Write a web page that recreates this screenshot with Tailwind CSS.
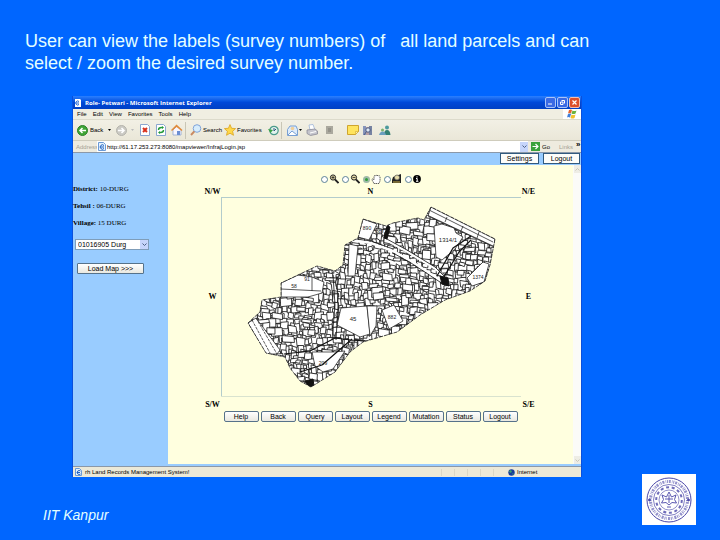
<!DOCTYPE html>
<html lang="en">
<head>
    <meta charset="UTF-8">
    <meta name="viewport" content="width=device-width, initial-scale=1.0">
    <title>Land Records - Survey Numbers</title>
    <script src="https://cdn.jsdelivr.net/npm/@tailwindcss/browser@4"></script>
</head>
<body class="bg-[#0066ff] font-['Liberation_Sans',Arial,sans-serif]">

<div class="min-h-screen flex flex-col">

    <h1 class="pt-[30px] pl-[25px] pr-24 text-[18px] leading-[22px] text-[#e4ffff]">User can view the labels (survey numbers) of&nbsp;&nbsp; all land parcels and can<br>select / zoom the desired survey number.</h1>

    <!-- Browser window -->
    <main class="mt-[22px] ml-[72px] mr-[138px] border-x border-[#0a50dc] text-[6px] leading-[8px] text-black">

        <!-- Title bar -->
        <header class="h-[13px] flex items-center gap-[3px] px-px bg-linear-to-b from-[#2a7fff] via-[#0048d8] to-[#0040c4] text-white">
            <svg class="w-[8px] h-[8px]" viewBox="0 0 8 8"><path d="M1 0h5l1 1v7H1z" fill="#fff"/><path d="M5 2.5A2 2 0 1 0 5 5.5M2 4h3" fill="none" stroke="#1c62d6"/></svg>
            <span class="grow font-['Open_Sans',sans-serif] font-bold">Role- Petwari - Microsoft Internet Explorer</span>
            <div class="flex gap-px">
                <button aria-label="Minimize" class="w-[11px] h-[11px] rounded-[2px] border border-[#a9c4f8] bg-[#3a6ae4] flex items-end p-[2px]"><svg class="w-[5px] h-[2px]" viewBox="0 0 5 2"><path d="M0 1h4" stroke="#fff"/></svg></button>
                <button aria-label="Restore" class="w-[11px] h-[11px] rounded-[2px] border border-[#a9c4f8] bg-[#3a6ae4] flex items-center justify-center"><svg class="w-[7px] h-[7px]" viewBox="0 0 7 7"><path d="M2.5 1.500h3v3M1.500 3h2.500v2.500h-2.500z" fill="none" stroke="#fff"/></svg></button>
                <button aria-label="Close" class="w-[11px] h-[11px] rounded-[2px] border border-[#f2bfb0] bg-[#dc4f2c] flex items-center justify-center"><svg class="w-[7px] h-[7px]" viewBox="0 0 7 7"><path d="M1.500 1.500l4 4m0-4l-4 4" stroke="#fff" stroke-width="1.200"/></svg></button>
            </div>
        </header>

        <!-- Menu bar -->
        <nav class="h-[11px] flex items-center gap-[6px] pl-[4px] bg-[#f0eee2] border-b border-[#dcdacb]">
            <a href="#">File</a>
            <a href="#">Edit</a>
            <a href="#">View</a>
            <a href="#">Favorites</a>
            <a href="#">Tools</a>
            <a href="#">Help</a>
            <span class="ml-auto w-[18px] h-[10px] bg-white flex items-center justify-center">
                <svg class="w-[10px] h-[10px]" viewBox="0 0 10 10"><path d="M2 1q2-1 3 0L4 4.500q-2-1-3 0z" fill="#e8632c"/><path d="M5.500 1.500q2 1 4 0l-1 3q-2 1-4 0z" fill="#6cb33e"/><path d="M1 5q2-1 3 0L3 8.500q-2-1-3 0z" fill="#3f7fd9"/><path d="M4.500 5.500q2 1 4 0l-1 3.500q-2 1-4 0z" fill="#f2c02e"/></svg>
            </span>
        </nav>

        <!-- Toolbar -->
        <div class="h-[21px] flex items-center pl-[4px] bg-linear-to-b from-[#f2f0e5] to-[#eae7d8] border-b border-[#cfccbc]">
            <button class="flex items-center gap-[2px] w-[39px]">
                <svg class="w-[11px] h-[11px]" viewBox="0 0 11 11"><circle cx="5.500" cy="5.500" r="5" fill="#3fa535" stroke="#2b7f2a"/><path d="M9 5.500H3M5.500 3L3 5.500 5.500 8" fill="none" stroke="#fff" stroke-width="1.500"/></svg>
                Back
                <svg class="ml-[3px] w-[3px] h-[2px]" viewBox="0 0 3 2"><path d="M0 0h3L1.500 2z"/></svg>
            </button>
            <button aria-label="Forward" class="flex items-center gap-[4px] w-[24px]">
                <svg class="w-[11px] h-[11px]" viewBox="0 0 11 11"><circle cx="5.500" cy="5.500" r="5" fill="#cbcac4" stroke="#b4b3ac"/><path d="M2 5.500h6M5.500 3L8 5.500 5.500 8" fill="none" stroke="#fff" stroke-width="1.500"/></svg>
                <svg class="w-[3px] h-[2px]" viewBox="0 0 3 2"><path d="M0 0h3L1.500 2z" fill="#bbb"/></svg>
            </button>
            <button aria-label="Stop" class="w-[16px]"><svg class="w-[10px] h-[12px]" viewBox="0 0 10 12"><path d="M.5.5h7l2 2v9h-9z" fill="#fff" stroke="#8ba6cf"/><path d="M3 4l4 4m0-4L3 8" stroke="#d9301c" stroke-width="2"/></svg></button>
            <button aria-label="Refresh" class="w-[15px]"><svg class="w-[10px] h-[12px]" viewBox="0 0 10 12"><path d="M.5.5h7l2 2v9h-9z" fill="#fff" stroke="#8ba6cf"/><path d="M2.500 6q0-2.500 3-2.500h1M7.500 6q0 2.500-3 2.500h-1" fill="none" stroke="#249a3a" stroke-width="1.400"/><path d="M6 2l2 1.600L6 5zM4 7L2 8.500 4 10z" fill="#249a3a"/></svg></button>
            <button aria-label="Home" class="w-[14px]"><svg class="w-[12px] h-[12px]" viewBox="0 0 12 12"><path d="M2 6l4-4 4 4v5H2z" fill="#f8f6ff" stroke="#8fa6cf" stroke-width=".8"/><path d="M0 6l5.500-5.500L11.500 6l-1 1-5-4-4.500 4z" fill="#e08b3c"/><path d="M6 7h3v4H6z" fill="#6b8ed3"/></svg></button>
            <button class="flex items-center gap-px w-[39px] h-[17px] pl-[4px] border-l border-[#c9c6b6]">
                <svg class="w-[12px] h-[12px]" viewBox="0 0 12 12"><circle cx="7" cy="4.500" r="3.800" fill="#d6ecfc" stroke="#7fa3d8"/><path d="M4.300 7.300L1 11" stroke="#c98a62" stroke-width="2"/></svg>
                Search
            </button>
            <button class="flex items-center gap-px w-[40px]">
                <svg class="w-[12px] h-[12px]" viewBox="0 0 12 12"><path d="M6 .6l1.600 3.700 4 .3-3 2.700.9 4L6 9.200 2.500 11.300l.9-4-3-2.700 4-.3z" fill="#ffd84a" stroke="#dba520" stroke-width=".8"/></svg>
                Favorites
            </button>
            <button aria-label="History" class="w-[18px] h-[17px] flex items-center pl-[4px] border-r border-[#c9c6b6]"><svg class="w-[11px] h-[11px]" viewBox="0 0 11 11"><circle cx="6" cy="5.500" r="4.200" fill="#e3f3ee" stroke="#4c9b8b" stroke-width="1.200"/><path d="M6 3v3l2-2" fill="none" stroke="#30557d"/><path d="M0 4l2.500 4L5 5z" fill="#3aa344"/></svg></button>
            <button aria-label="Mail" class="ml-[5px] flex items-center gap-px w-[19px]"><svg class="w-[11px] h-[11px]" viewBox="0 0 11 11"><path d="M.5 4.500L3 1h6l1.500 3.500v6H.5z" fill="#dcebfb" stroke="#78a0d4"/><path d="M1 10l4-4 5 4" fill="#fff" stroke="#78a0d4"/><circle cx="5.500" cy="3.500" r="1.800" fill="#f0cf9a"/></svg><svg class="w-[3px] h-[2px]" viewBox="0 0 3 2"><path d="M0 0h3L1.500 2z"/></svg></button>
            <button aria-label="Print" class="w-[19px]"><svg class="w-[12px] h-[12px]" viewBox="0 0 12 12"><path d="M3 1l4-.5L9 6H4z" fill="#fff" stroke="#9db4d8" stroke-width=".8"/><path d="M1 6l8-1 2.500 2v3l-7 1.500L1 9.500z" fill="#c4c4cc" stroke="#8c8c98" stroke-width=".8"/><path d="M4 9l6-1.500" stroke="#fff"/></svg></button>
            <button aria-label="Edit" class="w-[22px]"><svg class="w-[9px] h-[8px]" viewBox="0 0 9 8"><path d="M1 0h7v8H1z" fill="#aaa89e"/><path d="M3 2h3v4H3z" fill="#94928a"/></svg></button>
            <button aria-label="Notes" class="w-[15px]"><svg class="w-[12px] h-[10px]" viewBox="0 0 12 10"><path d="M.5.5h11v6l-3 3h-8z" fill="#ffe45e" stroke="#cfa52e"/><path d="M8.500 9.500v-3h3z" fill="#fff3a8" stroke="#cfa52e" stroke-width=".6"/></svg></button>
            <button aria-label="Research" class="w-[17px]"><svg class="w-[11px] h-[11px]" viewBox="0 0 11 11"><path d="M1 1h3v9H1z" fill="#8795bb"/><path d="M4 2h3v8H4z" fill="#b6a0a6"/><path d="M7 1h3v9H7z" fill="#7783a2"/><circle cx="6" cy="5" r="2.200" fill="#dfe9f5" stroke="#4d5c83"/><path d="M4.500 6.500L2 10" stroke="#4d5c83"/></svg></button>
            <button aria-label="Messenger"><svg class="w-[12px] h-[11px]" viewBox="0 0 12 11"><circle cx="8" cy="2.500" r="2" fill="#4d9a9d"/><path d="M5 10q0-5 3-5t3.500 5z" fill="#358073"/><circle cx="3.500" cy="5" r="1.500" fill="#7db36a"/><path d="M0 10q1-3.500 3.500-3.500T7 10z" fill="#6b9fbf"/></svg></button>
        </div>

        <!-- Address bar -->
        <div class="h-[12px] flex items-center bg-[#eeebdf] border-b border-[#8b98a8]">
            <label for="address" class="pl-[3px] w-[24px] text-[#a5a295]">Address</label>
            <div class="grow h-full flex items-center gap-px bg-white pl-px">
                <svg class="w-[8px] h-[9px]" viewBox="0 0 8 9"><path d="M.5.5h5l2 2v6h-7z" fill="#e6f1fd" stroke="#6a9ad6"/><path d="M6 3.500a2.200 2.200 0 1 0 0 3M2.500 5H6" fill="none" stroke="#1d62c4"/></svg>
                <input id="address" type="text" value="http://61.17.253.273:8080/mapviewer/InfrajLogin.jsp" class="grow min-w-0 h-[9px] outline-none">
                <button aria-label="Show addresses" class="w-[8px] h-[10px] bg-[#c6d5fb] flex items-center justify-center"><svg class="w-[5px] h-[3px]" viewBox="0 0 5 3"><path d="M.5.500l2 2 2-2" fill="none" stroke="#4d6185"/></svg></button>
            </div>
            <button class="flex items-center gap-[2px] pl-[3px] w-[31px]"><svg class="w-[9px] h-[9px]" viewBox="0 0 9 9"><path d="M0 0h9v9H0z" fill="#3aa23c"/><path d="M1.500 4.500h5M4.500 2L7 4.500 4.500 7" fill="none" stroke="#fff" stroke-width="1.200"/></svg>Go</button>
            <span class="w-[17px] text-[#a5a295]">Links</span>
            <span class="w-[5px] text-[8px] font-bold self-start">»</span>
        </div>

        <!-- Page content -->
        <section class="bg-[#99ccff]">
            <div class="h-[12px] flex justify-end gap-[4px] pr-px text-[7px] leading-[9px]">
                <button class="w-[39px] h-[11px] bg-[#fdfdfa] border border-[#315a7e]">Settings</button>
                <button class="w-[37px] h-[11px] bg-[#fdfdfa] border border-[#315a7e]">Logout</button>
            </div>

            <div class="flex">
                <aside class="w-[95px] shrink-0 pt-[20px] font-['Liberation_Serif',serif] text-[7px] leading-[9px]">
                    <p><b>District:</b> 10-DURG</p>
                    <p class="mt-[8px]"><b>Tehsil :</b> 06-DURG</p>
                    <p class="mt-[8px]"><b>Village:</b> 15 DURG</p>
                    <div class="relative mt-[11px] ml-[2px] w-[74px] font-['Liberation_Sans',Arial,sans-serif]">
                        <select aria-label="Village map" class="block appearance-none w-full h-[11px] pl-[2px] bg-white border border-[#7f9db9] text-[7px] leading-[8px]">
                            <option>01016905 Durg</option>
                        </select>
                        <span class="absolute right-px top-px w-[8px] h-[9px] bg-[#c6d5fb] flex items-center justify-center pointer-events-none"><svg class="w-[5px] h-[3px]" viewBox="0 0 5 3"><path d="M.5.500l2 2 2-2" fill="none" stroke="#4d6185"/></svg></span>
                    </div>
                    <button class="block mt-[13px] ml-[4px] w-[67px] h-[11px] rounded-[1px] bg-linear-to-b from-white to-[#e9e8e0] border border-[#56728a] font-['Liberation_Sans',Arial,sans-serif] text-[7px] leading-[8px]">Load Map &gt;&gt;&gt;</button>
                </aside>

                <div class="grow bg-[#ffffdf] flex flex-col items-center pt-[8px] pb-[42px]">
                    <!-- Map tools -->
                    <div class="flex items-center gap-[3px] h-[12px]">
                        <label class="flex items-center gap-px"><input type="radio" name="tool" class="appearance-none w-[7px] h-[7px] rounded-full border border-[#5d8296] bg-white checked:border-2 checked:border-[#9fb9a8] checked:bg-[#2f9e3a]"><svg class="w-[10px] h-[10px]" viewBox="0 0 10 10" aria-label="Zoom in"><circle cx="4" cy="3.500" r="2.600" fill="#e6dca8" stroke="#222"/><path d="M2.500 3.500h3M4 2v3" stroke="#222" stroke-width=".8"/><path d="M6 5.500L9.500 9" stroke="#222" stroke-width="1.800"/></svg></label>
                        <label class="flex items-center gap-px"><input type="radio" name="tool" class="appearance-none w-[7px] h-[7px] rounded-full border border-[#5d8296] bg-white checked:border-2 checked:border-[#9fb9a8] checked:bg-[#2f9e3a]"><svg class="w-[10px] h-[10px]" viewBox="0 0 10 10" aria-label="Zoom out"><circle cx="4" cy="3.500" r="2.600" fill="#e6dca8" stroke="#222"/><path d="M2.500 3.500h3" stroke="#222" stroke-width=".8"/><path d="M6 5.500L9.500 9" stroke="#222" stroke-width="1.800"/></svg></label>
                        <label class="flex items-center gap-px"><input type="radio" name="tool" checked class="appearance-none w-[7px] h-[7px] rounded-full border border-[#5d8296] bg-white checked:border-2 checked:border-[#9fb9a8] checked:bg-[#2f9e3a]"><svg class="w-[10px] h-[10px]" viewBox="0 0 10 10" aria-label="Pan"><path d="M3 9.500L.8 5.500l1-.7L3 6V2l1-.6L5 2l.8-1.200L7 2l1.300-.4L9 3v4L8 9.500z" fill="#fff" stroke="#333" stroke-width=".8" stroke-dasharray="1.500 .7"/></svg></label>
                        <label class="flex items-center gap-px"><input type="radio" name="tool" class="appearance-none w-[7px] h-[7px] rounded-full border border-[#5d8296] bg-white checked:border-2 checked:border-[#9fb9a8] checked:bg-[#2f9e3a]"><svg class="w-[10px] h-[10px]" viewBox="0 0 10 10" aria-label="Full extent"><path d="M1 3l8-3v9H0V6z" fill="#222"/><circle cx="5" cy="3.500" r="2.500" fill="#e6dca8" stroke="#555" stroke-width=".7"/><path d="M1 8h7" stroke="#c8ad48"/></svg></label>
                        <label class="flex items-center gap-px"><input type="radio" name="tool" class="appearance-none w-[7px] h-[7px] rounded-full border border-[#5d8296] bg-white checked:border-2 checked:border-[#9fb9a8] checked:bg-[#2f9e3a]"><svg class="w-[8px] h-[8px]" viewBox="0 0 8 8" aria-label="Info"><circle cx="4" cy="4" r="3.900"/><path d="M4 1.300v1.200M3 3.500h1.200V6M3 6.300h2.400" fill="none" stroke="#fff"/></svg></label>
                    </div>

                    <!-- Map with compass labels -->
                    <div class="mt-[2px] grid grid-cols-[16px_300px_16px] items-center text-center whitespace-nowrap font-['Liberation_Serif',serif] font-bold text-[8px] leading-[10px]">
                        <span>N/W</span><span>N</span><span>N/E</span>
                        <span>W</span>
                        <svg class="w-[300px] h-[200px]" viewBox="221 197 300 200">
                            <defs><clipPath id="village"><path d="M363 219L386 226 393 223 418 218 424 220 431 207 495 239 490 265 485 281 470 291 445 300 420 315 397 332 363 342 350 352 335 372 311 387 300 381 290 368 285 357 266 353 248 323 260 312 262 300 281 297 281 283 298 275 317 266 335 271 343 265 345 245 358 238z"/></clipPath></defs>
                            <g clip-path="url(#village)" stroke="#111" stroke-linejoin="round">
                                <path d="M221 197h300v200H221z" fill="#fff" stroke="none"/>
                                <g id="parcels" fill="#fff" stroke-width=".8"></g>
                                <g fill="#fff" stroke-width=".7">
                                    <path d="M363 219l14 5-8 16-11-3z"/>
                                    <path d="M431 207l64 32-1 8-66-31z"/>
                                    <path d="M429 210l64 32M427 215l66 31M447 217l-2 5M463 226l-2 5M479 232l-2 6" fill="none"/>
                                    <path d="M434 226l8-2 12 4 2 5 7 4-8 12-13 11-6-3z"/>
                                    <path d="M483 262l6 2-5 18-12 4-5-8z"/>
                                    <path d="M349 244l9 2-3 30h-7z"/>
                                    <path d="M341 308l26-2 3 28-10 3-23-12z"/>
                                    <path d="M367 306l10 0-1 20-6 10z"/>
                                    <path d="M281 283l17-8 14 2 12 5-2 11-14 4-27 0z"/>
                                    <path d="M281 289l40 2M312 277v14" fill="none"/>
                                    <path d="M248 323l8-5 24 32-3 4h-11z"/>
                                    <path d="M256 318l21 36M252 320l18 33" fill="none" stroke-dasharray="3 1"/>
                                    <path d="M312 352h21l12-1-12 18-10 3-8-6z"/>
                                    <path d="M382 310l12-5 9 16-14 8z"/>
                                </g>
                                <path d="M386 240l22 12 28 17 10 10M349 240l22 3 22 8 18 10 32 21" fill="none" stroke="#fff" stroke-width="2.500"/>
                                <path d="M385 238l22 12 28 17 10 10M349 238l22 3 22 8M393 253l18 10 32 21M333 275l2 30-3 35M337 276l1 30-2 34" fill="none" stroke-width=".8"/>
                                <path d="M387 226l3 1-3 12-3-1zM440 276l8 2 1 8-7-2zM305 381l8-2 1 7-5 1z" fill="#111"/>
                                <path d="M437 276l16-28 18-12M442 280l17-28 12-12M284 354l26-3 25-13 16 2 14 1M300 372l22-7 30-26" fill="none" stroke-width="1.200"/>
                            </g>
                            <path d="M363 219L386 226 393 223 418 218 424 220 431 207 495 239 490 265 485 281 470 291 445 300 420 315 397 332 363 342 350 352 335 372 311 387 300 381 290 368 285 357 266 353 248 323 260 312 262 300 281 297 281 283 298 275 317 266 335 271 343 265 345 245 358 238z" fill="none" stroke="#222" stroke-width=".8" stroke-dasharray="4 1"/>
                            <g font-family="Liberation Sans" font-size="5" font-weight="400" fill="#222" text-anchor="middle">
                                <text x="367" y="230">890</text>
                                <text x="380" y="233">887</text>
                                <text x="448" y="242" font-size="6">1314/1</text>
                                <text x="478" y="279">1374</text>
                                <text x="353" y="321" font-size="6">45</text>
                                <text x="392" y="319">882</text>
                                <text x="307" y="281">91</text>
                                <text x="294" y="288">58</text>
                                <text x="323" y="365">209</text>
                            </g>
                            <path d="M221.500 197v199.500M221 197.500h300" fill="none" stroke="#b3cccc"/>
                            <path d="M221 396.500h300" stroke="#d9e3cf"/>
                        </svg>
                        <span>E</span>
                        <span class="pt-[3px]">S/W</span><span class="pt-[3px]">S</span><span class="pt-[3px]">S/E</span>
                    </div>

                    <div class="mt-px flex gap-[2px] text-[7px] leading-[8px]">
                        <button class="w-[35px] h-[11px] rounded-[2px] bg-linear-to-b from-white to-[#e9e8e0] border border-[#56728a]">Help</button>
                        <button class="w-[35px] h-[11px] rounded-[2px] bg-linear-to-b from-white to-[#e9e8e0] border border-[#56728a]">Back</button>
                        <button class="w-[35px] h-[11px] rounded-[2px] bg-linear-to-b from-white to-[#e9e8e0] border border-[#56728a]">Query</button>
                        <button class="w-[35px] h-[11px] rounded-[2px] bg-linear-to-b from-white to-[#e9e8e0] border border-[#56728a]">Layout</button>
                        <button class="w-[35px] h-[11px] rounded-[2px] bg-linear-to-b from-white to-[#e9e8e0] border border-[#56728a]">Legend</button>
                        <button class="w-[35px] h-[11px] rounded-[2px] bg-linear-to-b from-white to-[#e9e8e0] border border-[#56728a]">Mutation</button>
                        <button class="w-[35px] h-[11px] rounded-[2px] bg-linear-to-b from-white to-[#e9e8e0] border border-[#56728a]">Status</button>
                        <button class="w-[35px] h-[11px] rounded-[2px] bg-linear-to-b from-white to-[#e9e8e0] border border-[#56728a]">Logout</button>
                    </div>
                </div>

                <!-- Scrollbar -->
                <div class="w-[8px] shrink-0 bg-[#fbfbf8] flex flex-col items-center justify-between">
                    <span class="w-[7px] h-[8px] bg-[#eeede5] flex items-center justify-center"><svg class="w-[5px] h-[3px]" viewBox="0 0 5 3"><path d="M.5 2.500l2-2 2 2" fill="none" stroke="#c9c7ba"/></svg></span>
                    <span class="w-[7px] h-[8px] bg-[#eeede5] flex items-center justify-center"><svg class="w-[5px] h-[3px]" viewBox="0 0 5 3"><path d="M.5.500l2 2 2-2" fill="none" stroke="#c9c7ba"/></svg></span>
                </div>
            </div>
            <div class="h-[2px]"></div>
        </section>

        <!-- Status bar -->
        <footer class="h-[11px] flex items-center gap-[3px] pl-[2px] bg-[#ece9d8] border-t border-[#8b98a8]">
            <svg class="w-[7px] h-[8px]" viewBox="0 0 7 8"><path d="M.5.500h4l2 2v5h-6z" fill="#e6f1fd" stroke="#6a9ad6"/><path d="M5.500 3a2 2 0 1 0 0 3M2 4.500h3" fill="none" stroke="#1d62c4"/></svg>
            <span class="grow">rh Land Records Management System!</span>
            <span class="flex w-[64px] h-[7px] gap-[12px] shrink-0">
                <i class="w-px bg-[#dad7c6]"></i><i class="w-px bg-[#dad7c6]"></i><i class="w-px bg-[#dad7c6]"></i><i class="w-px bg-[#dad7c6]"></i><i class="w-px bg-[#dad7c6]"></i>
            </span>
            <span class="flex items-center gap-[2px] w-[73px]"><svg class="w-[7px] h-[7px]" viewBox="0 0 7 7"><circle cx="3.500" cy="3.500" r="3.200" fill="#173a9c"/><path d="M2 1l2 1-1 2-2-1zM4 4l2 1-1 1z" fill="#39a56a"/></svg>Internet</span>
        </footer>
    </main>

    <!-- Slide footer, the seal rises a little beside the window -->
    <div class="-mt-[3px] flex items-end justify-between pl-[43px] pr-[24px] pb-[15px]">
        <p class="pb-[2px] text-[14px] leading-[16px] italic text-[#e4ffff]">IIT Kanpur</p>
        <svg class="w-[54px] h-[51px] bg-white" viewBox="0 0 54 51" fill="none" stroke="#4a46a8">
            <circle cx="27" cy="26" r="22"/>
            <circle cx="27" cy="26" r="18.500" stroke-width="3" stroke-dasharray="1 .9 2 1.200 .6 .8" opacity=".6"/>
            <circle cx="27" cy="26" r="15.500" stroke-width=".7"/>
            <circle cx="27" cy="26" r="12.800" stroke-width="2" stroke-dasharray="3 2.700" opacity=".8"/>
            <circle cx="27" cy="26" r="10" stroke-width=".6"/>
            <path d="M27 18l2.500 5 4.500-2-1.500 4.500 2 3.500-4.500-.5L27 31l-3-2.500-4.500.5 2-3.500L20 21l4.500 2zM27 21v8M23 25h8M25 33h4" stroke-width=".9"/>
            <circle cx="7.500" cy="26" r="1" fill="#4a46a8"/><circle cx="46.500" cy="26" r="1" fill="#4a46a8"/>
        </svg>
    </div>
</div>

<script>
    // Small land parcels, drawn from a fixed seed so the map is the same on each load
    let seed = 17;
    function rnd(n) {
        seed = (seed * 16807) % 2147483647;
        return (seed / 2147483647) * n;
    }

    // One path per parcel, so that later parcels cover the lines below them
    function parcel(x, y, w, h) {
        const s = rnd(3) - 1;
        const t = rnd(2) - 1;
        return `<path d="M${x} ${y}l${w} ${s}l${t} ${h}l${-w} ${t - s}z"/>`;
    }

    let shapes = '';
    for (let y = 204; y < 390; y += 5) {
        for (let x = 244; x < 497; x += 6) {
            shapes += parcel(x + rnd(5) - 2, y + rnd(4) - 2, 3 + rnd(6), 3 + rnd(6));
        }
    }
    for (let i = 0; i < 200; i++) {
        shapes += parcel(246 + rnd(245), 205 + rnd(178), 4 + rnd(8), 3 + rnd(7));
    }
    document.getElementById('parcels').innerHTML = shapes;
</script>
</body>
</html>
